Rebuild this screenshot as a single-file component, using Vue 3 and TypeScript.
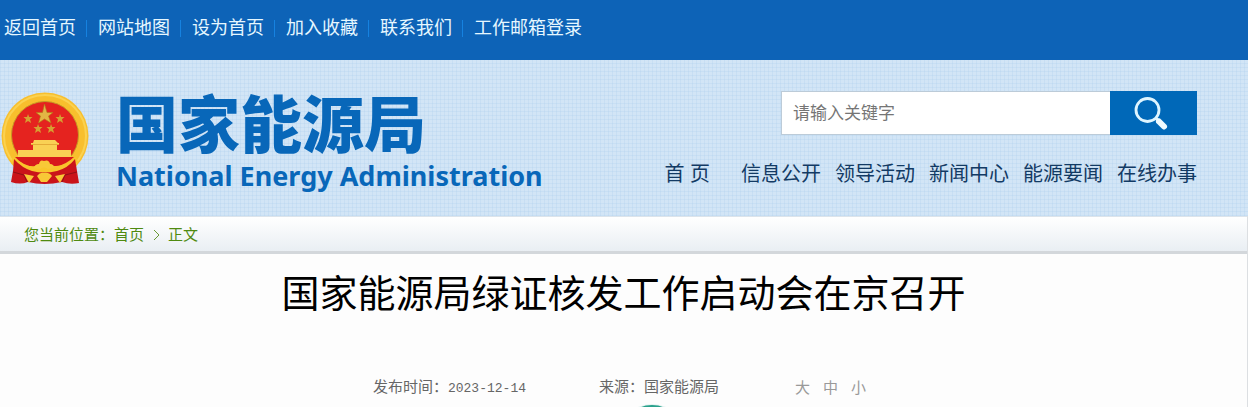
<script setup lang="ts">
import { ref } from 'vue'

const topLinks: string[] = ['返回首页', '网站地图', '设为首页', '加入收藏', '联系我们', '工作邮箱登录']
const navLinks: string[] = ['首 页', '信息公开', '领导活动', '新闻中心', '能源要闻', '在线办事']
const sizes: string[] = ['大', '中', '小']
const keyword = ref('')
</script>

<template>
  <div class="page">
    <nav class="topbar">
      <a v-for="link in topLinks" :key="link" href="#" class="top-link">{{ link }}</a>
    </nav>

    <header class="banner">
      <a href="#" class="brand">
        <svg class="emblem" viewBox="0 0 90 96" aria-hidden="true">
          <circle cx="45" cy="46" r="43.500" fill="#f8bf2d" />
          <circle cx="45" cy="46" r="41" fill="none" stroke="#fbd250" stroke-width="2" />
          <circle cx="45" cy="45" r="33.500" fill="#e5231f" stroke="#c69a24" stroke-width="1" />
          <path d="M44.500 14 L47 22.500 H53 L48.500 26 L51 33 L44.500 29 L38.500 33 L40.500 26 L36 22.500 H42.500 Z" fill="#e3b544" stroke="#ae7a16" stroke-width=".6" />
          <g fill="#d6a032">
            <path id="star" d="M28 24 L29.200 27 H32.500 L30 29.200 L31.100 33 L28 31 L25 33 L26 29.200 L23.500 27 H27 Z" />
            <use href="#star" x="32" />
            <use href="#star" x="10" y="10" />
            <use href="#star" x="23" y="10" />
          </g>
          <path d="M34 50 H55 L58 53 H33 Z M31 53 H59 V55 H57 V60 H71 V67 H18 V60 H33 V55 H31 Z" fill="#f9d154" />
          <path d="M31 54.500 H59" stroke="#e4ab37" stroke-width="1" />
          <path d="M15 67 H74 Q67 74 55 77 H34 Q22 75 15 67 Z" fill="#d8191c" />
          <path d="M13 66 Q25 78 35 76 L44 72 L54 76 Q66 77 76 66 L78 72 Q64 84 44 84 Q24 84 11 72 Z" fill="#f9c52c" />
          <path d="M14 69 Q22 78 32 81 Q44 84 57 81 Q68 78 75 69 L77 81 L79 93 Q70 95 62 92 Q44 96 28 92 Q20 95 11 92 L13 81 Z" fill="#ca141a" />
          <path d="M13 82 L24 85 L27 92 M77 82 L65 85 L62 92" fill="none" stroke="#8f1015" stroke-width="1" />
          <path d="M34 78 Q35 74 39 74 Q40 69 44 71 Q49 69 50 74 Q54 74 54 78 L48 79 Q44 76 40 79 Z" fill="#f8c837" />
          <path d="M37 86 Q40 82 44 83 Q49 82 52 86 L47 92 H41 Z M24 84 L34 86 L29 93 Z M65 84 L55 86 L60 93 Z" fill="#f8c837" />
        </svg>
        <span class="names">
          <strong class="name-zh">国家能源局</strong>
          <span class="name-en">National Energy Administration</span>
        </span>
      </a>

      <div class="tools">
        <form class="search" @submit.prevent>
          <input v-model="keyword" type="text" placeholder="请输入关键字" aria-label="请输入关键字" />
          <button type="submit" aria-label="搜索">
            <svg viewBox="0 0 36 36" aria-hidden="true">
              <circle cx="14.500" cy="15" r="11.500" fill="none" stroke="#dff5ff" stroke-width="2.800" />
              <path d="M22.500 23 L26 26" stroke="#dff5ff" stroke-width="3" />
              <path d="M26 26.500 L31 31.500" stroke="#eefaff" stroke-width="6" stroke-linecap="round" />
            </svg>
          </button>
        </form>
        <nav class="main-nav">
          <a v-for="link in navLinks" :key="link" href="#">{{ link }}</a>
        </nav>
      </div>
    </header>

    <main class="content">
      <nav class="crumbs">
        <span>您当前位置：</span><a href="#">首页</a>
        <svg class="chevron" viewBox="0 0 8 14" aria-hidden="true"><path d="M1 2 L6 7 L1 12" /></svg>
        <a href="#">正文</a>
      </nav>
      <article>
        <h1>国家能源局绿证核发工作启动会在京召开</h1>
        <div class="meta">
          <span>发布时间：<time datetime="2023-12-14">2023-12-14</time></span>
          <span class="source">来源：国家能源局</span>
          <span class="sizes">
            <button v-for="size in sizes" :key="size" type="button">{{ size }}</button>
          </span>
        </div>
        <svg class="arc" viewBox="0 0 56 4" aria-hidden="true">
          <circle cx="28" cy="35" r="35" fill="#e4f3f1" />
          <circle cx="28" cy="33" r="32" fill="#2aa18c" />
        </svg>
      </article>
    </main>
  </div>
</template>

<style>
body {
  margin: 0;
  background: #fdfdfd;
}
</style>

<style scoped>
.page {
  font-family: "Liberation Sans", "Noto Sans CJK SC", sans-serif;
  overflow: hidden;
}
a {
  color: inherit;
  text-decoration: none;
}
.topbar {
  display: flex;
  align-items: center;
  height: 60px;
  padding: 0 4px 4px;
  box-sizing: border-box;
  background: #0d63b7;
  color: #e6f7ff;
  font-size: 18px;
  line-height: 24px;
}
.top-link {
  display: flex;
  align-items: center;
}
.top-link + .top-link::before {
  content: "";
  width: 1px;
  height: 17px;
  margin: 0 11px 0 10px;
  background: #1682e0;
}
.banner {
  display: flex;
  justify-content: space-between;
  align-items: flex-start;
  height: 156px;
  padding: 30px 51px 0 0;
  box-sizing: border-box;
  background-color: #d2e5f6;
  background-image:
    repeating-linear-gradient(90deg, rgba(164, 201, 235, 0.22) 0 1px, transparent 1px 4px),
    repeating-linear-gradient(0deg, rgba(164, 201, 235, 0.22) 0 1px, transparent 1px 4px);
}
.brand {
  display: flex;
  gap: 26px;
}
.emblem {
  width: 90px;
  height: 96px;
}
.names {
  display: flex;
  flex-direction: column;
  color: #0867b9;
}
.name-zh {
  font-size: 62px;
  font-weight: 900;
  line-height: 74px;
}
.name-en {
  font-family: "Noto Sans", sans-serif;
  font-size: 27px;
  font-weight: 700;
  line-height: 24px;
  white-space: nowrap;
}
.tools {
  display: flex;
  flex-direction: column;
  align-items: flex-end;
}
.search {
  display: flex;
  height: 44px;
  width: 416px;
  margin-top: 1px;
}
.search input {
  flex: 1;
  min-width: 0;
  padding: 2px 11px 0;
  border: 1px solid #bccbd8;
  border-right: 0;
  border-radius: 0;
  background: #fff;
  color: #555;
  font: 17px "Liberation Sans", "Noto Sans CJK SC", sans-serif;
}
.search input::placeholder {
  color: #757575;
}
.search button {
  display: flex;
  align-items: center;
  justify-content: center;
  width: 87px;
  padding: 0 6px 0 0;
  border: 0;
  background: #0068b8;
}
.search svg {
  width: 36px;
  height: 36px;
}
.main-nav {
  display: flex;
  gap: 14px;
  margin-top: 24px;
  color: #123a64;
  font-size: 20px;
  line-height: 30px;
  white-space: nowrap;
}
.main-nav a:first-child {
  margin-right: 17px;
}
.content {
  border-right: 1px solid #dcdfe2;
}
.crumbs {
  display: flex;
  align-items: center;
  height: 38px;
  padding: 2px 24px 0;
  box-sizing: border-box;
  border-top: 1px solid #dce4eb;
  border-bottom: 3px solid #d3d7db;
  background: linear-gradient(#fff, #e9eef3);
  color: #4f8a10;
  font-size: 15px;
  line-height: 20px;
}
.chevron {
  width: 8px;
  height: 14px;
  margin: 0 7px 0 9px;
  fill: none;
  stroke: #6a9a35;
}
article {
  display: flex;
  flex-direction: column;
  align-items: center;
}
h1 {
  margin: 12px 0 0;
  color: #000;
  font-size: 38px;
  font-weight: 400;
  line-height: 56px;
}
.meta {
  display: flex;
  justify-content: center;
  margin-top: 55px;
  padding-right: 8px;
  color: #666;
  font-size: 15px;
  line-height: 20px;
}
time {
  font-family: "Liberation Mono", monospace;
  font-size: 13px;
}
.source {
  margin-left: 73px;
}
.sizes {
  display: flex;
  gap: 13px;
  margin-left: 76px;
}
.sizes button {
  padding: 0;
  border: 0;
  background: none;
  color: #999;
  font: inherit;
}
.arc {
  display: block;
  width: 56px;
  height: 4px;
  margin: 5px 0 0 57px;
}
</style>
